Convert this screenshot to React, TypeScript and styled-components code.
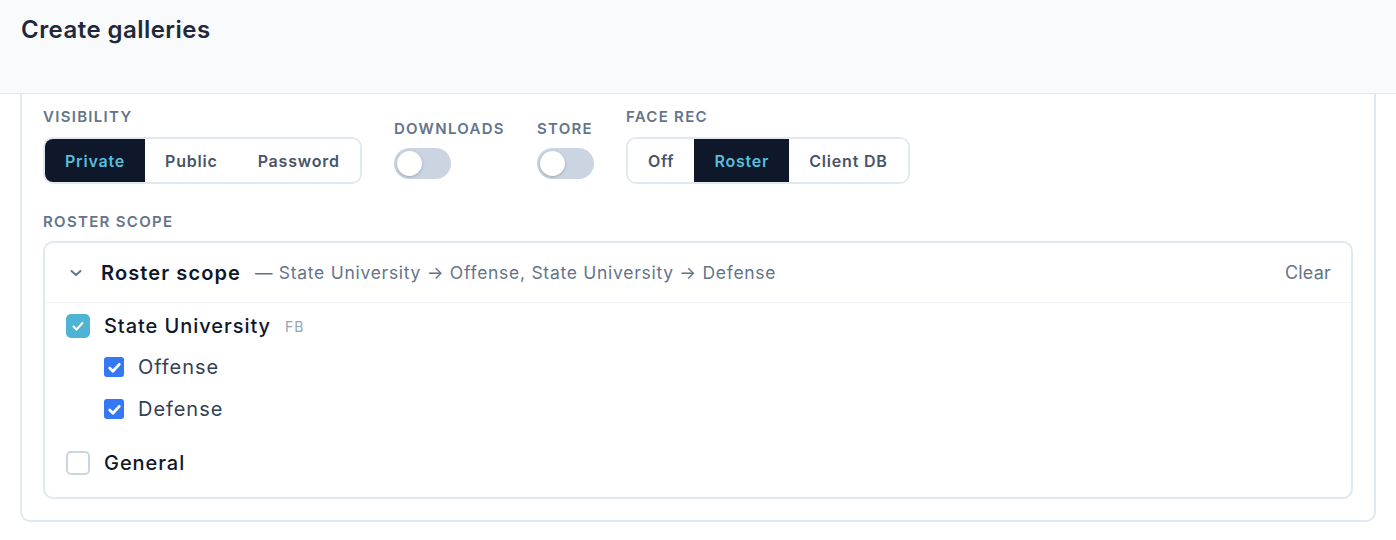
import React from "react";
import styled, { createGlobalStyle } from "styled-components";

const Global = createGlobalStyle`
  html, body { margin: 0; padding: 0; background: #ffffff; }
  body { font-family: Inter, "Noto Sans", "Liberation Sans", sans-serif; color: #0f172a; -webkit-font-smoothing: antialiased; }
  * { box-sizing: border-box; }
`;

const Header = styled.header`
  height: 94px;
  background: #f8fafc;
  border-bottom: 1px solid #e2e8f0;
  padding: 14px 21px 0;
`;

const Title = styled.h1`
  margin: 0;
  font-size: 24px;
  line-height: 32px;
  font-weight: 600;
  color: #1e293b;
  letter-spacing: 0.45px;
`;

const Page = styled.div`
  padding: 0 20px;
`;

const Card = styled.section`
  border: 2px solid #e2e8f0;
  border-top: none;
  border-radius: 0 0 10px 10px;
  padding: 13px 21px 21px;
`;

const ControlsRow = styled.div`
  display: flex;
  align-items: flex-end;
  gap: 32px;
`;

const Field = styled.div<{ $gap: number; $pb?: number }>`
  display: flex;
  flex-direction: column;
  align-items: flex-start;
  gap: ${(p) => p.$gap}px;
  padding-bottom: ${(p) => p.$pb ?? 0}px;
`;

const Label = styled.div`
  font-size: 15px;
  line-height: 20px;
  font-weight: 600;
  letter-spacing: 1.3px;
  text-transform: uppercase;
  color: #64748b;
`;

const Segmented = styled.div`
  display: inline-flex;
  height: 47px;
  border: 2px solid #e2e8f0;
  border-radius: 10px;
  overflow: hidden;
`;

const SegButton = styled.button<{ $active?: boolean }>`
  border: none;
  margin: 0;
  padding: 0 20px;
  font-family: inherit;
  font-size: 16px;
  font-weight: 600;
  letter-spacing: 0.8px;
  cursor: pointer;
  background: ${(p) => (p.$active ? "#0f172a" : "#ffffff")};
  color: ${(p) => (p.$active ? "#58bddc" : "#475569")};
`;

const Toggle = styled.div`
  position: relative;
  width: 57px;
  height: 31px;
  border-radius: 999px;
  background: #cbd5e1;
`;

const Knob = styled.span`
  position: absolute;
  left: 3px;
  top: 3px;
  width: 25px;
  height: 25px;
  border-radius: 50%;
  background: #ffffff;
  box-shadow: 0 1px 3px rgba(15, 23, 42, 0.25);
`;

const Section = styled.div`
  margin-top: 28px;
  display: flex;
  flex-direction: column;
  gap: 9px;
`;

const ScopeBox = styled.div`
  border: 2px solid #e2e8f0;
  border-radius: 10px;
`;

const ScopeHeader = styled.div`
  height: 60px;
  display: flex;
  align-items: center;
  padding: 0 20px 0 23px;
  border-bottom: 1px solid #f1f5f9;
`;

const Chevron = styled.svg`
  flex: none;
  margin-right: 17px;
`;

const ScopeTitle = styled.span`
  font-size: 20px;
  font-weight: 600;
  letter-spacing: 1.1px;
  color: #0f172a;
`;

const ScopeSummary = styled.span`
  margin-left: 14px;
  font-size: 17.5px;
  letter-spacing: 0.72px;
  color: #64748b;
`;

const ClearButton = styled.button`
  margin-left: auto;
  border: none;
  background: none;
  padding: 0;
  font-family: inherit;
  font-size: 18px;
  letter-spacing: 0.2px;
  color: #64748b;
  cursor: pointer;
`;

const ScopeBody = styled.div`
  padding: 3px 21px 14px;
`;

const Row = styled.div<{ $h: number; $gap: number; $mt?: number }>`
  display: flex;
  align-items: center;
  height: ${(p) => p.$h}px;
  gap: ${(p) => p.$gap}px;
  margin-top: ${(p) => p.$mt ?? 0}px;
`;

const Children = styled.div`
  padding-left: 38px;
`;

const Box = styled.span<{ $size: number; $color?: string; $radius: number }>`
  flex: none;
  display: inline-flex;
  align-items: center;
  justify-content: center;
  width: ${(p) => p.$size}px;
  height: ${(p) => p.$size}px;
  border-radius: ${(p) => p.$radius}px;
  background: ${(p) => p.$color ?? "#ffffff"};
  border: ${(p) => (p.$color ? "none" : "2px solid #cbd5e1")};
`;

const ItemText = styled.span<{ $weight: number; $color: string }>`
  font-size: 20px;
  font-weight: ${(p) => p.$weight};
  letter-spacing: 0.95px;
  color: ${(p) => p.$color};
`;

const Tag = styled.span`
  font-size: 14px;
  color: #94a3b8;
  letter-spacing: 0.06em;
`;

const Check = ({ w, sw }: { w: number; sw: number }) => (
  <svg width={w} height={w} viewBox="0 0 16 16" fill="none">
    <path d="M3.5 8.5l3 3 6-6.5" stroke="#fff" strokeWidth={sw} strokeLinecap="round" strokeLinejoin="round" />
  </svg>
);

function Segment({ items, active }: { items: string[]; active: string }) {
  return (
    <Segmented>
      {items.map((it) => (
        <SegButton key={it} $active={it === active}>
          {it}
        </SegButton>
      ))}
    </Segmented>
  );
}

export default function App() {
  return (
    <>
      <Global />
      <Header>
        <Title>Create galleries</Title>
      </Header>
      <Page>
        <Card>
          <ControlsRow>
            <Field $gap={10}>
              <Label>Visibility</Label>
              <Segment items={["Private", "Public", "Password"]} active="Private" />
            </Field>
            <Field $gap={9} $pb={5}>
              <Label>Downloads</Label>
              <Toggle>
                <Knob />
              </Toggle>
            </Field>
            <Field $gap={9} $pb={5}>
              <Label>Store</Label>
              <Toggle>
                <Knob />
              </Toggle>
            </Field>
            <Field $gap={10}>
              <Label>Face rec</Label>
              <Segment items={["Off", "Roster", "Client DB"]} active="Roster" />
            </Field>
          </ControlsRow>

          <Section>
            <Label>Roster scope</Label>
            <ScopeBox>
              <ScopeHeader>
                <Chevron width="16" height="16" viewBox="0 0 16 16" fill="none">
                  <path d="M3.5 6l4.5 4 4.5-4" stroke="#64748b" strokeWidth="2" strokeLinecap="round" strokeLinejoin="round" />
                </Chevron>
                <ScopeTitle>Roster scope</ScopeTitle>
                <ScopeSummary>— State University → Offense, State University → Defense</ScopeSummary>
                <ClearButton>Clear</ClearButton>
              </ScopeHeader>
              <ScopeBody>
                <Row $h={40} $gap={14}>
                  <Box $size={24} $radius={5} $color="#4fb4d4">
                    <Check w={16} sw={2} />
                  </Box>
                  <ItemText $weight={500} $color="#0f172a">State University</ItemText>
                  <Tag>FB</Tag>
                </Row>
                <Children>
                  <Row $h={42} $gap={14}>
                    <Box $size={20} $radius={3} $color="#3478f6">
                      <Check w={17} sw={2.6} />
                    </Box>
                    <ItemText $weight={400} $color="#334155">Offense</ItemText>
                  </Row>
                  <Row $h={42} $gap={14}>
                    <Box $size={20} $radius={3} $color="#3478f6">
                      <Check w={17} sw={2.6} />
                    </Box>
                    <ItemText $weight={400} $color="#334155">Defense</ItemText>
                  </Row>
                </Children>
                <Row $h={40} $gap={14} $mt={13}>
                  <Box $size={24} $radius={5} />
                  <ItemText $weight={500} $color="#0f172a">General</ItemText>
                </Row>
              </ScopeBody>
            </ScopeBox>
          </Section>
        </Card>
      </Page>
    </>
  );
}
